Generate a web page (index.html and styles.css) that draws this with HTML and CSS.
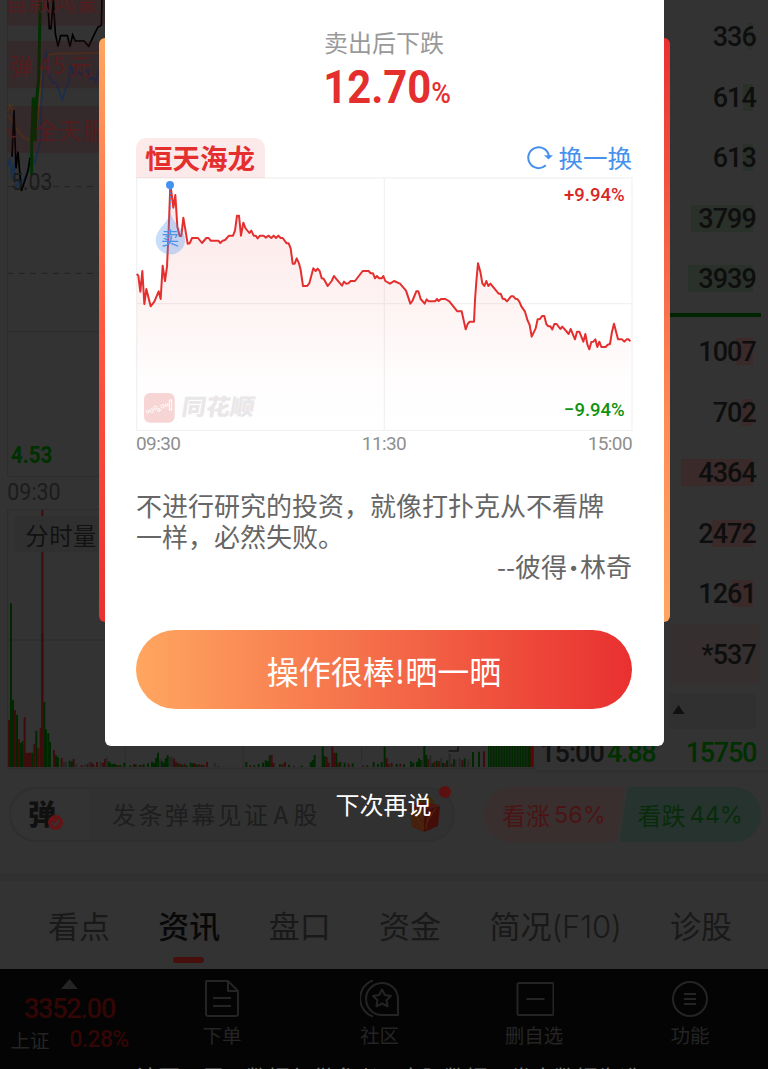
FILE: index.html
```html
<!DOCTYPE html>
<html lang="zh-CN">
<head>
<meta charset="utf-8">
<title>恒天海龙</title>
<link rel="stylesheet" href="styles.css">
</head>
<body>
<div class="page">
  <main class="market">
    <svg class="quote-chart" viewBox="0 0 1608 2316">
      <g class="grid">
        <path d="M23 0V1430H1608M23 995H1608M23 1529V2305H1608M23 1529H1608M23 1920H1608M376 1529V2305M730 1529V2305M1085 1529V2305"/>
      </g>
      <path class="dash" d="M23 560H320M23 820H320"/>
      <path class="s-orange" d="M23 335l7-22 10 22M22 345C50 370 50 410 85 418H100C125 360 115 190 140 168C150 160 180 159 320 159"/>
      <path class="s-blue" d="M22 500l8-25 6 60 6-45 6 75 12-30 10 10 16-40 8-45 10 30 18-70 2-110 8-130 7-26 8 72 12 25 8-5 8 20 12 35 8-30 10-20 8-55 8 30 14-12 8 10 20-15 8 30 8-8 8 15 8-35 10 10 10-14 10 20 16-10"/>
      <path class="s-black" d="M36 470l6-140 6 175 6-50 10 118 20-60 6-40M143 0l5 86h5L160 0l6 100 8 40 8-33h20l8 33 8-35 8 18h26l14 16 18-38 10-20 10-5L306 0"/>
      <path class="s-green" d="M95 525V420L100 293l5 130 4-110 7-80L121 0"/>
      <g class="band"><rect x="21" y="-10" width="299" height="87"/><rect x="21" y="123" width="299" height="142"/><rect x="21" y="318" width="299" height="141"/></g>
      <g class="danmaku">
        <text x="15" y="33" textLength="282">首款鸿蒙</text>
        <text x="30" y="224">弹</text><text x="116" y="222" textLength="80">45</text><text x="208" y="224">元</text>
        <text x="105" y="416" textLength="212">全天服</text>
        <path d="M22 385Q35 420 48 408"/>
      </g>
      <text class="num gray" x="33" y="571" textLength="124" lengthAdjust="spacingAndGlyphs">5.03</text>
      <text class="num green strong" x="33" y="1389" textLength="124" lengthAdjust="spacingAndGlyphs">4.53</text>
      <text class="num gray" x="22" y="1501" textLength="160" lengthAdjust="spacingAndGlyphs">09:30</text>
      <path class="v-red" d="M127 1530V2301"/>
      <rect class="chip" x="44" y="1548" width="290" height="107" rx="8"/>
      <text class="chip-text" x="76" y="1634" textLength="213">分时量</text>
      <path class="v-green" d="M33 2301V1810M39 2301V2101M51 2301V2144M63 2301V2229M68 2301V2223M97 2301V2258M109 2301V2192M133 2301V2107M138 2301V2188M145 2301V2200M150 2301V2226M168 2301V2266M174 2301V2272M209 2301V2282M216 2301V2284M325 2301V2284M331 2301V2288M338 2301V2292M344 2301V2291M350 2301V2295M361 2301V2295M373 2301V2288M391 2301V2296M407 2301V2293M419 2301V2295M431 2301V2293M444 2301V2290M456 2301V2285M462 2301V2289M468 2301V2274M474 2301V2258M486 2301V2284M491 2301V2288M497 2301V2275M503 2301V2266M535 2301V2290M547 2301V2294M560 2301V2296M572 2301V2288M579 2301V2290M591 2301V2294M605 2301V2295M739 2301V2286M763 2301V2296M776 2301V2292M789 2301V2288M797 2301V2281M803 2301V2284M809 2301V2266M840 2301V2293M867 2301V2294M905 2301V2297M932 2301V2286M938 2301V2280M944 2301V2265M968 2301V2240M974 2301V2268M1009 2301V2258M1021 2301V2285M1034 2301V2288M1058 2301V2290M1102 2301V2296M1121 2301V2286M1134 2301V2292M1145 2301V2286M1154 2301V2240M1190 2301V2292M1212 2301V2293M1233 2301V2284M1240 2301V2288M1251 2301V2285M1257 2301V2275M1262 2301V2280M1273 2301V2232M1279 2301V2265M1297 2301V2290M1310 2301V2282M1329 2301V2288M1342 2301V2281M1362 2301V2278M1394 2301V2275M1419 2301V2256M1437 2301V2255"/>
      <path class="v-red" d="M27 2301V2160M45 2301V2130M57 2301V2218M74 2301V2152M80 2301V2259M86 2301V2258M92 2301V2258M103 2301V2232M115 2301V2245M122 2301V2184M127 2301V1900M162 2301V2250M185 2301V2274M221 2301V2277M245 2301V2295M263 2301V2293M274 2301V2287M280 2301V2293M291 2301V2286M309 2301V2288M315 2301V2277M355 2301V2296M402 2301V2292M425 2301V2296M510 2301V2287M522 2301V2276M528 2301V2285M541 2301V2291M554 2301V2291M585 2301V2290M598 2301V2292M611 2301V2294M621 2301V2286M655 2301V2299M751 2301V2296M815 2301V2264M821 2301V2289M848 2301V2292M855 2301V2286M882 2301V2298M980 2301V2271M986 2301V2288M997 2301V2240M1003 2301V2258M1015 2301V2289M1046 2301V2291M1090 2301V2297M1160 2301V2274M1166 2301V2292M1175 2301V2289M1201 2301V2291M1285 2301V2278M1303 2301V2286M1317 2301V2284M1336 2301V2290M1354 2301V2291M1387 2301V2281M1452 2301V2254"/>
      <path class="v-gray" d="M192 2301V2285M198 2301V2286M229 2301V2291M256 2301V2293M268 2301V2287M302 2301V2285M320 2301V2273M480 2301V2278M510 2301V2271M516 2301V2272M644 2301V2289M1268 2301V2280M1291 2301V2265M1323 2301V2274M1349 2301V2262M1367 2301V2280M1379 2301V2274M1405 2301V2278"/>
      <path class="v-block" d="M1464 2215H1600V2301H1464Z"/>
      <path class="v-stripe" d="M1469 2301V2215M1477 2301V2215M1485 2301V2215M1493 2301V2215M1501 2301V2215M1509 2301V2215M1517 2301V2215M1525 2301V2215M1533 2301V2215M1541 2301V2215M1549 2301V2215M1557 2301V2215M1565 2301V2215M1573 2301V2215M1581 2301V2215"/>
      <path class="v-last" d="M1596 2301V2215"/>
      <path class="mark" d="M1346 2253H1374V2240"/>
    </svg>
    <aside class="orders">
      <ul class="book sell">
        <li><i class="w5"></i><b>336</b></li>
        <li><i class="w10"></i><b>614</b></li>
        <li><i class="w10"></i><b>613</b></li>
        <li><i class="w62"></i><b>3799</b></li>
        <li><i class="w65"></i><b>3939</b></li>
      </ul>
      <div class="split"></div>
      <ul class="book buy">
        <li><i class="w17"></i><b>1007</b></li>
        <li><i class="w12"></i><b>702</b></li>
        <li><i class="w72"></i><b>4364</b></li>
        <li><i class="w41"></i><b>2472</b></li>
        <li><i class="w21"></i><b>1261</b></li>
        <li class="tint"><b>*537</b></li>
      </ul>
      <div class="fold"><svg viewBox="0 0 12 9"><path d="M6 0L12 9H0Z"/></svg></div>
      <div class="tick"><span>15:00</span><span class="up">4.88</span><span class="up vol">15750</span></div>
    </aside>
  </main>

  <section class="social">
    <div class="comment">
      <div class="avatar"><span>弹</span><svg viewBox="0 0 14 14"><circle cx="7" cy="7" r="7"/><path d="M3.4 6.8L6.2 9.5L10.6 4.8"/></svg></div>
      <span class="placeholder">发条弹幕见证<em>A</em>股</span>
      <svg class="gift" viewBox="0 0 46 50">
        <circle cx="20" cy="18" r="8" fill="#3a2c0a"/>
        <path d="M3 21L18 24V46L6 41Z" fill="#45200c"/><path d="M18 24L34 20L32 40L18 46Z" fill="#430d0a"/>
        <path d="M2 20L18 16L34 19L18 25Z" fill="#4d1710"/><path d="M7 24L17 43M12 24L17 33M23 24L20 43M30 22L21 36" stroke="#512810"/>
        <circle cx="39" cy="6" r="6" fill="#5c1010"/>
      </svg>
    </div>
    <div class="votes"><div class="rise">看涨 <span>56%</span></div><div class="fall">看跌 <span>44%</span></div></div>
  </section>

  <nav class="tabs"><span>看点</span><span class="on">资讯</span><span>盘口</span><span>资金</span><span>简况<em>(F10)</em></span><span>诊股</span></nav>

  <footer class="toolbar">
    <div class="index"><svg viewBox="0 0 17 10"><path d="M8.5 0L17 10H0Z"/></svg><strong>3352.00</strong><div><span>上证</span><b>0.28%</b></div></div>
    <div class="tool"><svg viewBox="0 0 40 40"><path d="M4.500 3H26L36 13V36Q36 38 34 38H6Q4 38 4 36V4ZM26 3V13H36M11 20H29M11 28H29"/></svg>下单</div>
    <div class="tool shift"><svg viewBox="0 0 40 40"><path d="M13 2.500A19 19 0 0 0 13 38.500M38 37V20A16 16 0 1 0 22 37ZM22 11.500L24.800 17L31 17.900L26.500 22.200L27.600 28.400L22 25.500L16.400 28.400L17.500 22.200L13 17.900L19.200 17Z"/></svg>社区</div>
    <div class="tool"><svg viewBox="0 0 40 40"><rect x="3.500" y="5" width="36" height="32" rx="1.500"/><path d="M12.500 21H30.500"/></svg>删自选</div>
    <div class="tool"><svg viewBox="0 0 40 40"><circle cx="20" cy="21" r="17"/><path d="M14 16H26M14 21H26M14 26H26"/></svg>功能</div>
  </footer>
  <div class="notice">该页面展示数据仅供参考，实际数据以券商数据为准</div>

  <div class="ribbon"></div>
  <div class="dialog">
    <div class="summary"><p>卖出后下跌</p><strong>12.70<small>%</small></strong></div>
    <div class="chart-head">
      <h2>恒天海龙</h2>
      <div class="refresh"><svg viewBox="0 0 26 24"><path d="M18.800 19.300A10.400 10.400 0 1 1 22 10.500"/><path class="tip" d="M17 9.200H26L21.500 13.500Z"/></svg>换一换</div>
    </div>
    <svg class="stock" viewBox="0 0 1488 756">
      <defs>
        <linearGradient id="fill" x1="0" y1="0" x2="0" y2="1"><stop offset="0" stop-color="#e93030" stop-opacity=".12"/><stop offset=".5" stop-color="#e93030" stop-opacity=".055"/><stop offset=".8" stop-color="#e93030" stop-opacity=".01"/><stop offset="1" stop-color="#e93030" stop-opacity="0"/></linearGradient>
      </defs>
      <g transform="translate(-18 -144)">
        <path class="area" d="M20 900V432L25 437 31 485 37 423 43 522 49 477 62 529 73 515 86 484 92 507 98 407 105 453 111 410 116 300 121 165 124 185 130 233 136 195 142 290 149 318 154 318 160 263 173 341 179 340 186 324 204 324 216 339 229 324 236 324 242 332 265 332 271 339 278 332 285 330 297 317 309 317 315 302 321 257 327 257 333 317 340 278 346 294 358 309 364 302 371 317 377 317 383 325 390 317 401 317 407 323 416 317 424 324 431 317 438 324 445 317 452 324 458 324 470 340 476 340 482 355 488 401 494 401 500 385 507 400 512 420 519 468 531 468 538 460 550 415 557 423 563 416 569 423 575 445 581 446 593 468 605 453 612 438 620 448 636 467 642 455 648 461 655 460 662 453 675 453 698 423 716 423 722 430 729 430 735 445 741 438 747 445 755 445 760 438 766 453 780 461 792 453 810 461 828 482 841 521 847 513 859 484 865 484 872 507 884 521 890 508 896 514 915 514 921 507 926 513 933 507 946 507 958 514 982 544 995 544 1002 575 1007 598 1013 582 1019 575 1032 575 1035 510 1039 455 1044 400 1051 425 1057 460 1063 468 1069 453 1075 468 1081 461 1106 491 1112 491 1118 506 1124 507 1131 514 1143 499 1150 499 1156 506 1162 507 1168 515 1174 529 1185 545 1193 572 1199 585 1205 620 1217 595 1223 568 1230 567 1236 558 1243 558 1249 582 1255 589 1261 589 1267 598 1273 582 1280 582 1291 597 1297 590 1316 612 1322 597 1335 628 1341 605 1348 605 1360 635 1366 612 1372 643 1378 658 1384 636 1390 635 1396 628 1402 651 1408 635 1414 651 1427 651 1433 644 1440 642 1446 605 1452 581 1464 628 1476 628 1483 635 1490 628 1496 628 1501 634V900Z"/>
        <path class="frame" d="M20 144H1506V901H20ZM20 521H1506M763 144V901"/>
        <path class="line" d="M20 432 25 437 31 485 37 423 43 522 49 477 62 529 73 515 86 484 92 507 98 407 105 453 111 410 116 300 121 165 124 185 130 233 136 195 142 290 149 318 154 318 160 263 173 341 179 340 186 324 204 324 216 339 229 324 236 324 242 332 265 332 271 339 278 332 285 330 297 317 309 317 315 302 321 257 327 257 333 317 340 278 346 294 358 309 364 302 371 317 377 317 383 325 390 317 401 317 407 323 416 317 424 324 431 317 438 324 445 317 452 324 458 324 470 340 476 340 482 355 488 401 494 401 500 385 507 400 512 420 519 468 531 468 538 460 550 415 557 423 563 416 569 423 575 445 581 446 593 468 605 453 612 438 620 448 636 467 642 455 648 461 655 460 662 453 675 453 698 423 716 423 722 430 729 430 735 445 741 438 747 445 755 445 760 438 766 453 780 461 792 453 810 461 828 482 841 521 847 513 859 484 865 484 872 507 884 521 890 508 896 514 915 514 921 507 926 513 933 507 946 507 958 514 982 544 995 544 1002 575 1007 598 1013 582 1019 575 1032 575 1035 510 1039 455 1044 400 1051 425 1057 460 1063 468 1069 453 1075 468 1081 461 1106 491 1112 491 1118 506 1124 507 1131 514 1143 499 1150 499 1156 506 1162 507 1168 515 1174 529 1185 545 1193 572 1199 585 1205 620 1217 595 1223 568 1230 567 1236 558 1243 558 1249 582 1255 589 1261 589 1267 598 1273 582 1280 582 1291 597 1297 590 1316 612 1322 597 1335 628 1341 605 1348 605 1360 635 1366 612 1372 643 1378 658 1384 636 1390 635 1396 628 1402 651 1408 635 1414 651 1427 651 1433 644 1440 642 1446 605 1452 581 1464 628 1476 628 1483 635 1490 628 1496 628 1501 634"/>
        <path class="lead" d="M121 176V240"/>
        <circle class="dot" cx="120" cy="165" r="12"/>
        <path class="drop" d="M121 249C134 285 165 300 165 330A44 43 0 0 1 77 330C77 300 108 285 121 249Z"/>
        <text class="sell-mark" x="93" y="345">卖</text>
        <rect class="logo" x="42" y="789" width="92" height="89" rx="18"/>
        <g class="logo-lines"><circle cx="53" cy="845" r="4"/><circle cx="65" cy="842" r="5"/><circle cx="76" cy="833" r="5"/><circle cx="87" cy="840" r="4"/><circle cx="98" cy="829" r="5"/><circle cx="110" cy="825" r="4"/><rect x="118" y="810" width="7" height="30"/></g>
        <text class="brand" transform="translate(148 884) skewX(-9)" x="0" y="-28" textLength="218" lengthAdjust="spacingAndGlyphs">同花顺</text>
        <text class="pct red" x="1302" y="213" textLength="182" lengthAdjust="spacingAndGlyphs">+9.94%</text>
        <text class="pct down" x="1302" y="859" textLength="182" lengthAdjust="spacingAndGlyphs">−9.94%</text>
      </g>
    </svg>
    <div class="times"><span>09:30</span><span>11:30</span><span>15:00</span></div>
    <blockquote>不进行研究的投资，就像打扑克从不看牌<br>一样，必然失败。<cite>--彼得<i>•</i>林奇</cite></blockquote>
    <button class="share">操作很棒!晒一晒</button>
  </div>
  <div class="later">下次再说</div>
</div>
</body>
</html>
```
FILE: styles.css
```css
* { box-sizing: border-box; margin: 0; padding: 0; }
body { background: #333; font-family: "Noto Sans CJK SC", sans-serif; }
ul { list-style: none; }
.page { position: relative; width: 768px; height: 1069px; overflow: hidden; background: #333; display: flex; flex-direction: column; }
.market { display: flex; height: 773px; flex: none; }

.quote-chart { width: 536px; height: 772px; display: block; flex: none; }
.quote-chart path { fill: none; }
.grid path { stroke: #2d2d2d; stroke-width: 3; }
.quote-chart .dash { stroke: #222; stroke-width: 3; stroke-dasharray: 17 17; }
.s-orange { stroke: #543619; stroke-width: 5; }
.s-blue { stroke: #182f4e; stroke-width: 5; stroke-linejoin: round; }
.s-black { stroke: #000; stroke-width: 5; }
.s-green { stroke: #003100; stroke-width: 9; }
.band { fill: rgba(64, 18, 20, .24); }
.danmaku { font-size: 68px; font-weight: 400; fill: #541c1e; }
.danmaku path { stroke: #541c1e; stroke-width: 5; }
.num { font: 500 70px Roboto, sans-serif; }
.gray { fill: #1c1c1c; font-weight: 400; }
.green { fill: #003000; }
.strong { font-weight: 700; }
.chip { fill: #303030; }
.chip-text { font-size: 70px; fill: #121212; }
.v-red, .v-green, .v-gray { stroke-width: 6; }
.v-red { stroke: #3d0d0d; }
.v-green { stroke: #002800; }
.v-gray { stroke: #272727; }
.quote-chart .v-block { fill: #002900; }
.v-stripe { stroke: #1f2c1f; stroke-width: 2.500; }
.v-last { stroke: #570707; stroke-width: 9; }
.mark { stroke: #161616; stroke-width: 5; }

.orders { width: 232px; padding: 6.5px 0 0 134px; height: 773px; border-bottom: 3px solid #303030; }
.book li { height: 60.5px; padding-right: 12px; display: grid; align-items: center; justify-items: end; }
.book i { grid-area: 1 / 1; height: 27px; margin-right: 3px; background: #2a302a; }
.buy i { background: #3a2a2a; }
.book b { grid-area: 1 / 1; font: 500 27px/1 Roboto, sans-serif; letter-spacing: -.9px; color: #0e0e0e; padding-top: 2px; }
.w5 { width: 5px; } .w10 { width: 10px; } .w12 { width: 12px; } .w17 { width: 17px; } .w21 { width: 21px; }
.w41 { width: 41px; } .w62 { width: 62px; } .w65 { width: 65px; } .w72 { width: 72px; }
.book .tint { background: #352f2f; margin-right: 8px; padding-right: 4px; }
.split { height: 4px; background: #002400; margin: 4px 7px 4.500px 0; }
.fold { margin: 8px 12px 2px 0; height: 36px; background: #303030; display: flex; align-items: center; padding-left: 2px; }
.fold svg { width: 13px; height: 9px; margin-top: -2px; fill: #101010; }
.tick { margin-left: -130px; height: 43px; display: flex; align-items: center; font: 500 27px/1 Roboto, sans-serif; letter-spacing: -.9px; color: #111; padding-top: 2px; }
.tick .up { color: #003000; margin-left: 3px; letter-spacing: -1.300px; }
.tick .vol { margin-left: auto; margin-right: 12px; }

.social { height: 100px; flex: none; padding: 14px 7px 0 9px; display: flex; gap: 29px; align-items: flex-start; }
.comment { width: 446px; height: 55px; border: 2px solid #2f2f2f; border-radius: 28px; background: #313131; display: flex; align-items: center; }
.avatar { width: 78px; height: 51px; border-radius: 26px 0 0 26px; background: #333; padding-left: 17px; display: flex; align-items: center; }
.avatar span { font-size: 28px; font-weight: 900; color: #101010; line-height: 1; margin-top: -3px; }
.avatar svg { width: 15px; height: 15px; margin: 16px 0 0 -8px; }
.avatar circle { fill: #631414; }
.avatar path { stroke: #333; stroke-width: 2; fill: none; }
.placeholder { margin: -2px 0 0 23px; font-size: 24px; letter-spacing: 2.400px; color: #1e1e1e; white-space: nowrap; }
.placeholder em { font-style: normal; margin: 0 3px; }
.gift { width: 46px; height: 50px; flex: none; margin: -8px 1px 0 auto; }
.votes { display: flex; width: 277px; height: 55px; font-size: 24px; }
.votes div { display: flex; align-items: center; white-space: nowrap; }
.votes span { font-family: Inter, sans-serif; font-size: 23.500px; margin-left: 4px; }
.rise { width: 141px; padding-left: 18px; background: #392f2f; color: #4b1414; border-radius: 28px 0 0 28px; clip-path: polygon(0 0, 100% 0, 94.500% 100%, 0 100%); }
.fall { width: 142px; margin-left: -5px; padding-left: 18px; background: #27332e; color: #082c0b; border-radius: 0 28px 28px 0; clip-path: polygon(6% 0, 100% 0, 100% 100%, 0 100%); }

.tabs { height: 96px; flex: none; border-top: 8px solid #303030; padding: 0 36px 0 48px; display: flex; justify-content: space-between; align-items: center; font-size: 31px; color: #191919; }
.tabs span { line-height: 88px; position: relative; }
.tabs em { font: 300 31px/1 Inter, sans-serif; letter-spacing: -.2px; }
.tabs .on { font-weight: 500; color: #080808; }
.tabs .on::after { content: ""; position: absolute; left: 15px; bottom: 6px; width: 31px; height: 6px; border-radius: 3px; background: #470e0b; }

.toolbar { height: 100px; flex: none; background: #040404; display: grid; grid-template-columns: 144px repeat(4, 156px); color: #242424; font-size: 19.500px; }
.index { padding: 10px 5px 0 0; display: flex; flex-direction: column; align-items: center; }
.index > svg { width: 17px; height: 10px; fill: #242424; }
.index strong { font: 500 27px/1 Roboto, sans-serif; letter-spacing: -1.200px; color: #330606; margin-top: 7px; }
.index div { display: flex; gap: 20px; align-items: center; line-height: 28px; margin-top: 2px; }
.index b { font: 500 23px/30px Roboto, sans-serif; letter-spacing: -.7px; color: #330606; }
.tool { padding-top: 9px; display: flex; flex-direction: column; align-items: center; line-height: 34px; }
.tool.shift { padding-left: 3px; }
.tool svg { width: 40px; height: 40px; fill: none; stroke: #242424; stroke-width: 2; stroke-linejoin: round; }
.notice { position: absolute; top: 1065px; left: 136px; font-size: 22px; line-height: 22px; color: #777; white-space: nowrap; }

.ribbon { position: absolute; left: 99px; top: 38px; width: 571px; height: 584px; border-radius: 6px; background: linear-gradient(#ffa660, #ff5840 50%, #e93030) left / 50% 100% no-repeat, linear-gradient(#e93030, #ff8a55 65%, #ffa660) right / 50% 100% no-repeat; }
.dialog { position: absolute; left: 105px; top: 0; width: 559px; height: 746px; border-radius: 0 0 6px 6px; background: #fff; padding: 0 32px 0 31px; }
.summary { height: 138px; padding-top: 24px; text-align: center; }
.summary p { font-size: 24px; line-height: 35px; color: #999; }
.summary strong { display: block; font: 700 47px/56px Roboto, sans-serif; color: #e42f2f; padding-left: 7px; transform: scaleX(.89); }
.summary small { font-size: 30px; font-weight: 500; }
.chart-head { display: flex; justify-content: space-between; height: 40px; }
.chart-head h2 { background: #fce9e9; border-radius: 10px 10px 0 0; padding: 0 9.500px 0 9px; font-size: 27.500px; font-weight: 700; line-height: 38px; color: #e42f2f; }
.refresh { display: flex; align-items: center; gap: 6px; color: #4691ee; font-size: 24.500px; line-height: 38px; }
.refresh svg { width: 26px; height: 24px; margin-top: -1px; fill: none; stroke: #4691ee; stroke-width: 2; }
.refresh .tip { fill: #4691ee; stroke: none; }
.stock { width: 496px; height: 252px; display: block; overflow: visible; }
.area { fill: url(#fill); }
.frame { fill: none; stroke: #000; stroke-opacity: .05; stroke-width: 4; }
.line { fill: none; stroke: #e42f2f; stroke-width: 6; stroke-linejoin: round; }
.lead { stroke: #4691ee; stroke-width: 3; stroke-dasharray: 5 6; }
.dot { fill: #4691ee; }
.drop { fill: #4691ee; fill-opacity: .3; }
.sell-mark { font-size: 54px; fill: #4c93ee; }
.logo { fill: #f7d5d5; }
.logo-lines { fill: none; stroke: #fff; stroke-width: 3; }
.brand { font-size: 68px; font-weight: 900; fill: #e9e7e8; }
.pct { font: 500 57px Roboto, sans-serif; }
.red { fill: #d92727; }
.down { fill: #119311; }
.times { display: flex; justify-content: space-between; font: 400 19px/27px Roboto, sans-serif; color: #8f8f8f; letter-spacing: -.6px; }
blockquote { height: 173px; padding-top: 33px; font-size: 26px; line-height: 30.500px; color: #666; white-space: nowrap; }
cite { display: block; font-style: normal; width: 496px; text-align: right; }
cite i { display: inline-block; font: 18px/1 "DejaVu Sans", sans-serif; width: 13px; text-align: center; vertical-align: 2px; }
.share { display: block; width: 496px; height: 79px; border: 0; border-radius: 40px; background: linear-gradient(90deg, #ffa660, #e93030); color: #fff; font: 32px/74px "Noto Sans CJK SC", sans-serif; }
.later { position: absolute; top: 787px; left: 0; width: 767px; text-align: center; font-size: 24px; line-height: 34px; color: #fff; }
```
